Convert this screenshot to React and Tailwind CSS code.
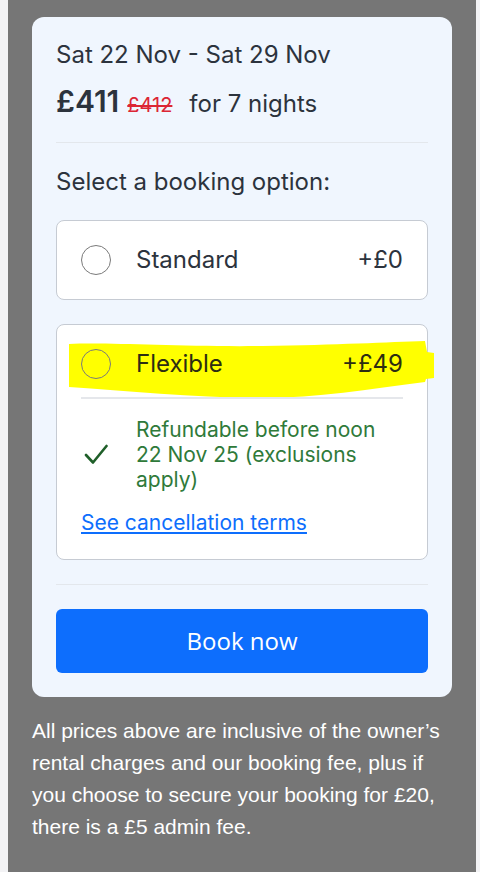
const inter = { fontFamily: "Inter, 'Noto Sans', sans-serif" };
const arial = { fontFamily: "'Liberation Sans', Arial, sans-serif" };

function Radio() {
  return (
    <span className="relative z-10 block h-[30px] w-[30px] shrink-0 rounded-full border-[1.5px] border-[#7a7a7a]"></span>
  );
}

export default function App() {
  return (
    <div className="min-h-[872px] bg-[#f3f3f5] pl-2 pr-1">
      <div className="min-h-[872px] bg-[#767676] px-6 pt-[17px] pb-8" style={inter}>
        {/* Card */}
        <div className="rounded-xl bg-[#f0f6fe] px-6 pt-[22px] pb-6 text-[#2c333d]">
          <div className="text-[24px] leading-[32px]">Sat 22 Nov - Sat 29 Nov</div>
          <div className="mt-[12px] flex h-[36px] items-baseline">
            <span className="text-[30px] font-semibold leading-[36px]">£411</span>
            <span className="ml-[8px] text-[20px] text-[#dc2635] line-through">£412</span>
            <span className="ml-[17px] text-[24px]">for 7 nights</span>
          </div>
          <div className="mt-[23px] h-px bg-[#e3e7ec]"></div>

          <div className="mt-[23px] text-[24px] leading-[32px]">Select a booking option:</div>

          {/* Standard */}
          <div className="mt-[22px] flex h-[80px] items-center rounded-lg border border-[#c6cbd3] bg-white px-6">
            <Radio />
            <span className="ml-[25px] text-[24px]">Standard</span>
            <span className="ml-auto text-[24px]">+£0</span>
          </div>

          {/* Flexible */}
          <div className="relative mt-6 rounded-lg border border-[#c6cbd3] bg-white px-6 pb-[23px]">
            {/* highlighter mark */}
            <svg
              className="absolute left-[11px] top-[16px] h-[58px] w-[366px]"
              viewBox="0 0 366 58"
              preserveAspectRatio="none"
            >
              <path
                d="M1 3 C40 1 110 6 195 5 C270 4 320 1 357 0 L359 11 L366 12 L366 37 L358 38 L357 41 C300 48 250 57 195 57 C130 57 60 50 1 46 Z"
                fill="#ffff00"
              />
            </svg>
            <div className="flex h-[64px] items-center pt-[14px]">
              <Radio />
              <span className="relative z-10 ml-[25px] text-[24px] text-[#2d2d12]">Flexible</span>
              <span className="relative z-10 ml-auto text-[24px] text-[#2d2d12]">+£49</span>
            </div>
            <div className="relative z-10 mt-[8px] h-[2px] bg-[#e5e7eb]"></div>
            <div className="mt-[18px] flex items-center">
              <span className="flex w-[30px] shrink-0 justify-center">
                <svg width="24" height="21" viewBox="0 0 24 21" fill="none">
                  <path
                    d="M2 11 L9 18.5 L22.5 2"
                    stroke="#1f5f29"
                    strokeWidth="2.6"
                    strokeLinecap="round"
                    strokeLinejoin="round"
                  />
                </svg>
              </span>
              <p className="ml-[25px] text-[21px] leading-[25px] text-[#2f7a3a]">
                Refundable before noon 22 Nov 25 (exclusions apply)
              </p>
            </div>
            <a
              href="#"
              className="mt-[18px] inline-block text-[21px] leading-[25px] text-[#0d6efd] underline underline-offset-2"
            >
              See cancellation terms
            </a>
          </div>

          <div className="mt-[24px] h-px bg-[#e3e7ec]"></div>

          <button
            className="mt-6 flex h-[64px] w-full items-center justify-center rounded-md bg-[#0d6efd] text-[24px] font-medium text-white"
            style={{ fontFamily: "'Open Sans', 'Noto Sans', sans-serif" }}
          >
            Book now
          </button>
        </div>

        <p className="mt-[18px] text-[21px] leading-[32px] text-white" style={arial}>
          All prices above are inclusive of the owner’s rental charges and our booking fee, plus if you choose to
          secure your booking for £20, there is a £5 admin fee.
        </p>
      </div>
    </div>
  );
}
